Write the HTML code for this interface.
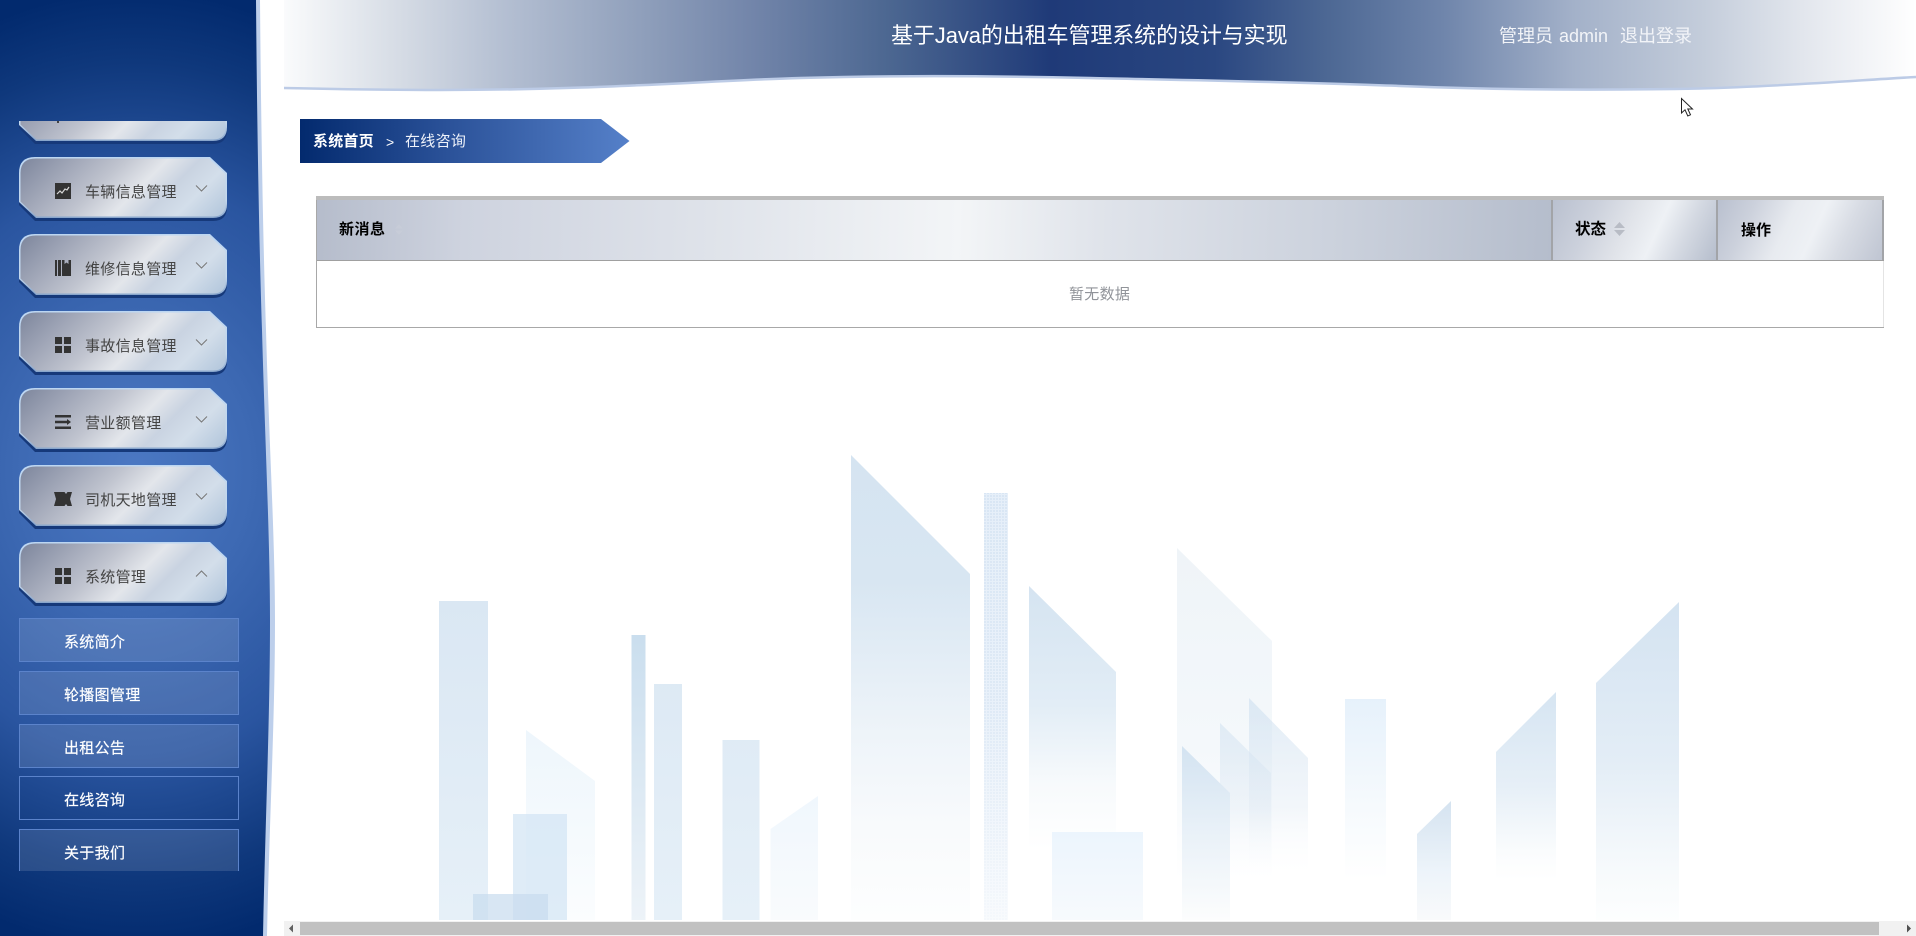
<!DOCTYPE html>
<html lang="zh-CN">
<head>
<meta charset="utf-8">
<title>基于Java的出租车管理系统的设计与实现</title>
<style>
*{box-sizing:border-box;margin:0;padding:0}
html,body{width:1916px;height:936px;overflow:hidden;background:#fff;font-family:"Liberation Sans","Noto Sans CJK SC",sans-serif}
.abs{position:absolute}
#city{position:absolute;left:0;top:0}
#hdr{position:absolute;left:0;top:0}
.t{position:absolute;white-space:nowrap;line-height:20px}
#menuclip{position:absolute;left:0;top:121px;width:260px;height:750px;overflow:hidden}
.mi{position:absolute;left:19px;width:208px;height:64px}
.mi svg.bg{position:absolute;left:0;top:0}
.mi .ic{position:absolute;left:36px;top:26px}
.mi .lb{position:absolute;left:66px;top:26px;font-size:15px;letter-spacing:.3px;color:#444;line-height:20px;white-space:nowrap}
.mi .ch{position:absolute;left:176px;top:27px}
.sub{position:absolute;left:19px;width:220px;height:44px;border:1px solid #5b83cb;background:rgba(255,255,255,.12);color:#fff;font-size:15px;line-height:20px;padding:14px 0 0 44px;letter-spacing:.3px;white-space:nowrap;-webkit-text-stroke:.2px #fff}
.th{position:absolute;top:200px;height:60px}
</style>
</head>
<body>

<svg width="0" height="0" style="position:absolute">
<defs>
<linearGradient id="metal" gradientUnits="userSpaceOnUse" x1="0" y1="0" x2="135" y2="135">
<stop offset="0" stop-color="#7b849b"/><stop offset=".22" stop-color="#a1a7b8"/><stop offset=".4" stop-color="#c0c4cf"/><stop offset=".56" stop-color="#e3e6eb"/><stop offset=".68" stop-color="#c9d3e1"/><stop offset=".8" stop-color="#d3deea"/><stop offset="1" stop-color="#aec3da"/>
</linearGradient>
<linearGradient id="edge" x1="0" y1="0" x2="0" y2="1">
<stop offset="0" stop-color="#bcd6f2"/><stop offset=".7" stop-color="#c4d8ee"/><stop offset="1" stop-color="#86a4cb"/>
</linearGradient>
<symbol id="btn" viewBox="0 0 208 64">
<path d="M16,2 H191 L208,18 V50 Q208,64 194,64 H16 L0,48 V18 Q0,2 16,2 Z" fill="#16397a"/>
<path d="M16,0 H191 L208,16 V47 Q208,61 194,61 H17 L0,45 V16 Q0,0 16,0 Z" fill="url(#edge)"/>
<path d="M17,1.500 H190 L206.500,17 V47 Q206.500,59.500 194,59.500 H17.500 L1.500,44.500 V16 Q1.500,1.500 17,1.500 Z" fill="url(#metal)"/>
</symbol>
</defs>
</svg>

<svg id="city" width="1916" height="921" viewBox="0 0 1916 921">
<defs>
<linearGradient id="g1" gradientUnits="userSpaceOnUse" x1="0" y1="600" x2="0" y2="920"><stop offset="0" stop-color="#dae7f3"/><stop offset="1" stop-color="#e6f0f8"/></linearGradient>
<linearGradient id="g2" gradientUnits="userSpaceOnUse" x1="0" y1="730" x2="0" y2="920"><stop offset="0" stop-color="#eef6fc"/><stop offset="1" stop-color="#fbfdfe"/></linearGradient>
<linearGradient id="g3" gradientUnits="userSpaceOnUse" x1="0" y1="635" x2="0" y2="920"><stop offset="0" stop-color="#cadeee"/><stop offset="1" stop-color="#edf3f8"/></linearGradient>
<linearGradient id="g4" gradientUnits="userSpaceOnUse" x1="0" y1="455" x2="0" y2="920"><stop offset="0" stop-color="#d5e4f1"/><stop offset=".27" stop-color="#d8e6f2"/><stop offset=".6" stop-color="#eef4f9"/><stop offset=".8" stop-color="#f8fafc"/><stop offset="1" stop-color="#fdfefe"/></linearGradient>
<linearGradient id="g5" gradientUnits="userSpaceOnUse" x1="0" y1="586" x2="0" y2="850"><stop offset="0" stop-color="#d5e4f1"/><stop offset=".45" stop-color="#e2edf6"/><stop offset=".75" stop-color="#f7fafc"/><stop offset="1" stop-color="#fff"/></linearGradient>
<linearGradient id="g6" gradientUnits="userSpaceOnUse" x1="0" y1="832" x2="0" y2="920"><stop offset="0" stop-color="#ecf5fd"/><stop offset="1" stop-color="#f7fafd"/></linearGradient>
<linearGradient id="g7" gradientUnits="userSpaceOnUse" x1="0" y1="547" x2="0" y2="880"><stop offset="0" stop-color="#eff4f8"/><stop offset=".6" stop-color="#f4f8fb"/><stop offset="1" stop-color="#fff"/></linearGradient>
<linearGradient id="g8" gradientUnits="userSpaceOnUse" x1="0" y1="698" x2="0" y2="880"><stop offset="0" stop-color="#c8dcee" stop-opacity=".55"/><stop offset=".6" stop-color="#dfe9f3" stop-opacity=".4"/><stop offset="1" stop-color="#fff" stop-opacity="0"/></linearGradient>
<linearGradient id="g9" gradientUnits="userSpaceOnUse" x1="0" y1="745" x2="0" y2="920"><stop offset="0" stop-color="#d3e3f1"/><stop offset=".5" stop-color="#e9f1f8"/><stop offset="1" stop-color="#fcfdfd"/></linearGradient>
<linearGradient id="g10" gradientUnits="userSpaceOnUse" x1="0" y1="698" x2="0" y2="880"><stop offset="0" stop-color="#e6f1fb"/><stop offset=".6" stop-color="#f6fafd"/><stop offset="1" stop-color="#fff"/></linearGradient>
<linearGradient id="g11" gradientUnits="userSpaceOnUse" x1="0" y1="801" x2="0" y2="920"><stop offset="0" stop-color="#d5e3f0"/><stop offset=".6" stop-color="#edf4fa"/><stop offset="1" stop-color="#f9fafb"/></linearGradient>
<linearGradient id="g12" gradientUnits="userSpaceOnUse" x1="0" y1="692" x2="0" y2="880"><stop offset="0" stop-color="#d6e5f2"/><stop offset=".5" stop-color="#e6eff7"/><stop offset=".85" stop-color="#fafcfd"/><stop offset="1" stop-color="#fff"/></linearGradient>
<linearGradient id="g13" gradientUnits="userSpaceOnUse" x1="0" y1="602" x2="0" y2="920"><stop offset="0" stop-color="#d4e3f1"/><stop offset=".5" stop-color="#e3edf6"/><stop offset=".85" stop-color="#f7fafc"/><stop offset="1" stop-color="#fdfefe"/></linearGradient>
<linearGradient id="g14" gradientUnits="userSpaceOnUse" x1="0" y1="797" x2="0" y2="920"><stop offset="0" stop-color="#f0f7fd"/><stop offset="1" stop-color="#f9fbfd"/></linearGradient>
<pattern id="dots" width="3" height="3" patternUnits="userSpaceOnUse"><rect width="3" height="3" fill="#e6eff9"/><rect width="2" height="2" fill="#d9e6f4"/></pattern>
<linearGradient id="fade" gradientUnits="userSpaceOnUse" x1="0" y1="493" x2="0" y2="920"><stop offset="0" stop-color="#fff"/><stop offset=".5" stop-color="#ddd"/><stop offset="1" stop-color="#444"/></linearGradient>
<mask id="dm"><rect x="980" y="490" width="40" height="431" fill="url(#fade)"/></mask>
</defs>
<rect x="439" y="601" width="49" height="319" fill="url(#g1)"/>
<polygon points="526,730 595,781 595,920 526,920" fill="url(#g2)"/>
<rect x="513" y="814" width="54" height="106" fill="#d2e4f4" fill-opacity=".7"/>
<rect x="473" y="894" width="75" height="26" fill="#c8dcee" fill-opacity=".7"/>
<rect x="631.5" y="635" width="14" height="285" fill="url(#g3)"/>
<rect x="654" y="684" width="28" height="236" fill="url(#g1)"/>
<rect x="722.500" y="740" width="37" height="180" fill="url(#g1)"/>
<polygon points="770.5,829 818,796 818,920 770.5,920" fill="url(#g14)"/>
<polygon points="851,455 970,574 970,920 851,920" fill="url(#g4)"/>
<rect x="984" y="493" width="24" height="427" fill="url(#dots)" mask="url(#dm)"/>
<polygon points="1029,586 1116,672 1116,860 1029,860" fill="url(#g5)"/>
<rect x="1052" y="832" width="91" height="88" fill="url(#g6)"/>
<polygon points="1177,548 1272,641 1272,880 1177,880" fill="url(#g7)"/>
<polygon points="1249,698 1308,758 1308,880 1249,880" fill="url(#g8)"/>
<polygon points="1220,723 1271,773 1271,880 1220,880" fill="url(#g8)"/>
<polygon points="1182,746 1230,793 1230,920 1182,920" fill="url(#g9)"/>
<rect x="1345" y="699" width="41" height="190" fill="url(#g10)"/>
<polygon points="1417,834 1451,801 1451,920 1417,920" fill="url(#g11)"/>
<polygon points="1496,752 1556,692 1556,885 1496,885" fill="url(#g12)"/>
<polygon points="1596,683 1679,602 1679,920 1596,920" fill="url(#g13)"/>
</svg>

<svg id="hdr" width="1916" height="100" viewBox="0 0 1916 100">
<defs>
<linearGradient id="hg" gradientUnits="userSpaceOnUse" x1="284" y1="0" x2="1916" y2="0">
<stop offset="0" stop-color="#fafbfc"/><stop offset=".07" stop-color="#d6dce5"/><stop offset=".135" stop-color="#b4bfd2"/><stop offset=".22" stop-color="#8f9fbb"/><stop offset=".29" stop-color="#7184a9"/><stop offset=".37" stop-color="#4c6791"/><stop offset=".47" stop-color="#1f3a78"/><stop offset=".57" stop-color="#2a4781"/><stop offset=".64" stop-color="#4d6894"/><stop offset=".71" stop-color="#6f85ab"/><stop offset=".79" stop-color="#a3b1c9"/><stop offset=".87" stop-color="#c4cddb"/><stop offset=".93" stop-color="#e2e6ed"/><stop offset="1" stop-color="#fff"/>
</linearGradient>
</defs>
<path d="M284,0 H1916 V77 C1860,80 1790,86 1700,88.5 C1600,90.5 1500,90 1400,86 C1300,82 1180,80 1090,78 C1000,76 900,75 800,78 C700,81 600,90 440,90 C380,90 330,89 284,88 Z" fill="url(#hg)"/>
<path d="M284,88 C330,89 380,90 440,90 C600,90 700,81 800,78 C900,75 1000,76 1090,78 C1180,80 1300,82 1400,86 C1500,90 1600,90.5 1700,88.5 C1790,86 1860,80 1916,77" fill="none" stroke="#bccbe6" stroke-width="2.500"/>
</svg>
<div class="t" style="left:891px;top:25px;font-size:22px;line-height:22px;color:#fff;letter-spacing:-.1px">基于Java的出租车管理系统的设计与实现</div>
<div class="t" style="left:1499px;top:26px;font-size:18px;line-height:20px;color:#f2f4f8;letter-spacing:0;word-spacing:1px">管理员 admin &nbsp;退出登录</div>

<!-- sidebar -->
<svg class="abs" style="left:0;top:0" width="290" height="936" viewBox="0 0 290 936">
<defs>
<radialGradient id="sb" gradientUnits="userSpaceOnUse" cx="0" cy="0" r="1" gradientTransform="translate(135 470) scale(400 480)">
<stop offset="0" stop-color="#4b78c3"/><stop offset=".3" stop-color="#3d69b3"/><stop offset=".6" stop-color="#2a55a0"/><stop offset=".85" stop-color="#0f387c"/><stop offset="1" stop-color="#022a6e"/>
</radialGradient>
</defs>
<path d="M0,0 H260 C261,120 263,240 266,330 C269,440 275,540 275,620 C275,720 269,830 267,936 H0 Z" fill="#bdcfeb"/>
<path d="M0,0 H256 C257,120 259,240 262,330 C265,440 270,540 270,620 C270,720 265,830 263,936 H0 Z" fill="url(#sb)"/>
</svg>

<div id="menuclip">
<div class="mi" style="top:-41px"><svg class="bg" width="208" height="64"><use href="#btn"/></svg><div class="abs" style="left:38px;top:41px;width:2px;height:2px;background:#444"></div></div>

<div class="mi" style="top:36px"><svg class="bg" width="208" height="64"><use href="#btn"/></svg>
<svg class="ic" width="16" height="16" viewBox="0 0 16 16"><rect width="16" height="16" fill="#333"/><path d="M2,11 L5,8 L7,10 L10,6 L12,7 L14,4" fill="none" stroke="#d8d8d8" stroke-width="1.200"/></svg>
<span class="lb">车辆信息管理</span>
<svg class="ch" width="13" height="9" viewBox="0 0 13 9"><path d="M1,1.500 L6.500,7 L12,1.500" fill="none" stroke="#777" stroke-width="1"/></svg></div>

<div class="mi" style="top:113px"><svg class="bg" width="208" height="64"><use href="#btn"/></svg>
<svg class="ic" width="16" height="16" viewBox="0 0 16 16"><path d="M0,0H2V16H0ZM3,0H6V16H3ZM7,0H9.500V4L11.500,2.500L13.500,4V0H16V16H7Z" fill="#333"/></svg>
<span class="lb">维修信息管理</span>
<svg class="ch" width="13" height="9" viewBox="0 0 13 9"><path d="M1,1.500 L6.500,7 L12,1.500" fill="none" stroke="#777" stroke-width="1"/></svg></div>

<div class="mi" style="top:190px"><svg class="bg" width="208" height="64"><use href="#btn"/></svg>
<svg class="ic" width="16" height="16" viewBox="0 0 16 16"><path d="M0,0H7V7H0ZM9,0H16V7H9ZM0,9H7V16H0ZM9,9H16V16H9Z" fill="#333"/></svg>
<span class="lb">事故信息管理</span>
<svg class="ch" width="13" height="9" viewBox="0 0 13 9"><path d="M1,1.500 L6.500,7 L12,1.500" fill="none" stroke="#777" stroke-width="1"/></svg></div>

<div class="mi" style="top:267px"><svg class="bg" width="208" height="64"><use href="#btn"/></svg>
<svg class="ic" width="16" height="16" viewBox="0 0 16 16"><path d="M0,1H16V3.500H0ZM0,6.800H12V9.200H0ZM0,12.500H16V15H0ZM12,5L16,8L12,11Z" fill="#333"/></svg>
<span class="lb">营业额管理</span>
<svg class="ch" width="13" height="9" viewBox="0 0 13 9"><path d="M1,1.500 L6.500,7 L12,1.500" fill="none" stroke="#777" stroke-width="1"/></svg></div>

<div class="mi" style="top:344px"><svg class="bg" width="208" height="64"><use href="#btn"/></svg>
<svg class="ic" style="left:35px" width="18" height="16" viewBox="0 0 18 16"><path d="M0,1H10.500L12,3L13.500,1H18L16,8L18,15H13.500L12,13L10.500,15H0L2,8Z" fill="#333"/></svg>
<span class="lb">司机天地管理</span>
<svg class="ch" width="13" height="9" viewBox="0 0 13 9"><path d="M1,1.500 L6.500,7 L12,1.500" fill="none" stroke="#777" stroke-width="1"/></svg></div>

<div class="mi" style="top:421px"><svg class="bg" width="208" height="64"><use href="#btn"/></svg>
<svg class="ic" width="16" height="16" viewBox="0 0 16 16"><path d="M0,0H7V7H0ZM9,0H16V7H9ZM0,9H7V16H0ZM9,9H16V16H9Z" fill="#333"/></svg>
<span class="lb">系统管理</span>
<svg class="ch" width="13" height="9" viewBox="0 0 13 9"><path d="M1,7.500 L6.500,2 L12,7.500" fill="none" stroke="#777" stroke-width="1"/></svg></div>

<div class="sub" style="top:497px">系统简介</div>
<div class="sub" style="top:550px">轮播图管理</div>
<div class="sub" style="top:603px">出租公告</div>
<div class="sub" style="top:655px;background:transparent">在线咨询</div>
<div class="sub" style="top:708px">关于我们</div>
</div>

<!-- breadcrumb -->
<svg class="abs" style="left:300px;top:119px" width="332" height="44" viewBox="0 0 332 44">
<defs><linearGradient id="bc" x1="0" y1="0" x2="1" y2="0"><stop offset="0" stop-color="#032a6e"/><stop offset=".45" stop-color="#2b5299"/><stop offset="1" stop-color="#5580c9"/></linearGradient></defs>
<polygon points="0,0 301,0 329.500,22 301,44 0,44" fill="url(#bc)"/>
</svg>
<div class="t" style="left:313px;top:132px;font-size:15px;font-weight:bold;color:#fff;letter-spacing:.2px">系统首页</div>
<div class="t" style="left:386px;top:132px;font-size:14px;color:#fff">&gt;</div>
<div class="t" style="left:405px;top:132px;font-size:15px;color:#eef2fa;letter-spacing:.3px">在线咨询</div>

<!-- table -->
<div class="abs" style="left:316px;top:196px;width:1568px;height:4px;background:#bcbcbc"></div>
<div class="th" style="left:316px;width:1235px;background:linear-gradient(92deg,#b5bccb 0%,#ced3df 12%,#dfe3ea 32%,#f3f5f7 52%,#dfe3ea 64%,#ccd2dd 82%,#b5bdcc 100%)"></div>
<div class="th" style="left:1552px;width:165px;background:linear-gradient(115deg,#b9c0cf 0%,#ccd1dc 25%,#e0e3e9 45%,#eef1f5 62%,#d4d9e2 78%,#b5bdcc 100%)"></div>
<div class="th" style="left:1718px;width:164px;background:linear-gradient(115deg,#b9c0cf 0%,#ccd1dc 20%,#e8ebf0 42%,#eef1f5 58%,#d8dce4 75%,#bfc5d2 100%)"></div>
<div class="abs" style="left:1551px;top:200px;width:2px;height:60px;background:#a2a4a8"></div>
<div class="abs" style="left:1716px;top:200px;width:2px;height:60px;background:#a2a4a8"></div>
<div class="abs" style="left:1882px;top:200px;width:2px;height:60px;background:#a2a4a8"></div>
<div class="abs" style="left:316px;top:260px;width:1568px;height:1px;background:#a0a0a0"></div>
<div class="abs" style="left:316px;top:200px;width:1px;height:128px;background:#a8a8a8"></div>
<div class="abs" style="left:1883px;top:261px;width:1px;height:66px;background:#e4e4e4"></div>
<div class="abs" style="left:316px;top:327px;width:1568px;height:1px;background:#a8a8a8"></div>
<div class="t" style="left:339px;top:220px;font-size:15px;font-weight:bold;color:#000;letter-spacing:.5px">新消息</div>
<svg class="abs" style="left:395px;top:223px" width="8" height="13" viewBox="0 0 8 13"><path d="M4,1L8,5.500H0ZM0,7.500H8L4,12Z" fill="#c9ced8" opacity=".6"/></svg>
<div class="t" style="left:1575px;top:220px;font-size:15.500px;font-weight:bold;color:#000">状态</div>
<svg class="abs" style="left:1614px;top:222px" width="11" height="14" viewBox="0 0 11 14"><path d="M5.500,0L11,6H0ZM0,8H11L5.500,14Z" fill="#b8bcc5"/></svg>
<div class="t" style="left:1741px;top:221px;font-size:15px;font-weight:bold;color:#000">操作</div>
<div class="t" style="left:1069px;top:285px;font-size:15px;color:#909399;letter-spacing:.3px">暂无数据</div>

<!-- scrollbar -->
<div class="abs" style="left:284px;top:921px;width:1632px;height:15px;background:#f1f1f1"></div>
<div class="abs" style="left:300px;top:922px;width:1579px;height:13px;background:#c1c1c1"></div>
<svg class="abs" style="left:288px;top:924px" width="6" height="9" viewBox="0 0 6 9"><path d="M5,0.500V8.500L1,4.500Z" fill="#606060"/></svg>
<svg class="abs" style="left:1906px;top:924px" width="6" height="9" viewBox="0 0 6 9"><path d="M1,0.500V8.500L5,4.500Z" fill="#505050"/></svg>

<!-- cursor -->
<svg class="abs" style="left:1680px;top:97px" width="16" height="22" viewBox="0 0 16 22"><path d="M1.500,1.500V16L5,12.800L7.800,19L10.500,17.800L7.800,12H12.500Z" fill="#fff" stroke="#222" stroke-width="1"/></svg>

</body>
</html>
